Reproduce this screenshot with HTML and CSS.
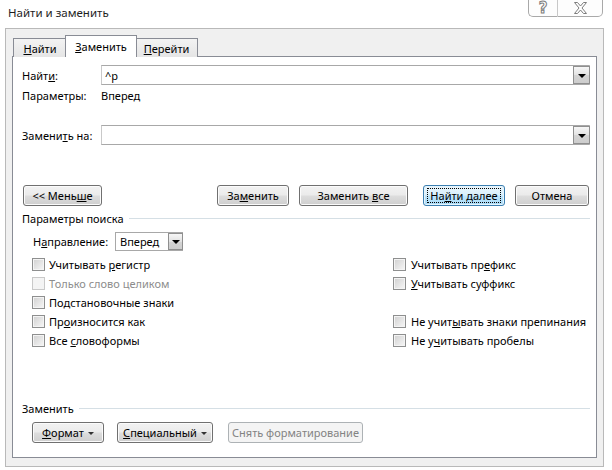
FILE: index.html
```html
<!DOCTYPE html>
<html lang="ru">
<head>
<meta charset="utf-8">
<title>Найти и заменить</title>
<link rel="stylesheet" href="styles.css">
</head>
<body>
<div class="window">
  <div class="titlebar">
    <span class="title">Найти и заменить</span>
    <div class="caption-btns">
      <div class="cap help"><span class="q">?</span></div>
      <div class="cap close">
        <svg width="15" height="12" viewBox="0 0 15 12"><polygon points="1.5,0.5 4.5,0.5 7.5,4 10.5,0.5 13.5,0.5 9,6 13.5,11.5 10.5,11.5 7.5,8 4.5,11.5 1.5,11.5 6,6" fill="#fff" stroke="#7d7d7d" stroke-width="1" stroke-linejoin="round"/></svg>
      </div>
    </div>
  </div>
  <div class="client">
    <div class="tabs">
      <div class="tab t-find"><span><u>Н</u>айти</span></div>
      <div class="tab t-replace active"><span><u>З</u>аменить</span></div>
      <div class="tab t-goto"><span><u>П</u>ерейти</span></div>
    </div>
    <div class="panel">
      <div class="field-row first">
        <span class="lbl">Найт<u>и</u>:</span>
        <div class="combo"><span class="val">^p</span><span class="dd"><i class="tri"></i></span></div>
      </div>
      <div class="field-row params">
        <span class="lbl">Параметры:</span>
        <span class="val">Вперед</span>
      </div>
      <div class="field-row replace">
        <span class="lbl">Замени<u>т</u>ь на:</span>
        <div class="combo"><span class="val"></span><span class="dd"><i class="tri"></i></span></div>
      </div>
      <div class="btn-row">
        <div class="btn b-less"><span>&lt;&lt; Мень<u>ш</u>е</span></div>
        <div class="btn b-repl"><span>За<u>м</u>енить</span></div>
        <div class="btn b-all"><span>Заменить <u>в</u>се</span></div>
        <div class="btn b-next default"><span class="focus"><span>На<u>й</u>ти далее</span></span></div>
        <div class="btn b-cancel"><span>Отмена</span></div>
      </div>
      <div class="group g-search"><span>Параметры поиска</span><i class="line"></i></div>
      <div class="dir-row">
        <span class="dir-lbl">Н<u>а</u>правление:</span>
        <div class="select"><span class="val">Вперед</span><span class="dd small"><i class="tri"></i></span></div>
      </div>
      <div class="checks">
        <div class="col">
          <div class="chk"><i class="box"></i><span>Учитывать <u>р</u>егистр</span></div>
          <div class="chk disabled"><i class="box"></i><span>Только слово целиком</span></div>
          <div class="chk"><i class="box"></i><span>По<u>д</u>становочные знаки</span></div>
          <div class="chk"><i class="box"></i><span>Пр<u>о</u>износится как</span></div>
          <div class="chk"><i class="box"></i><span>Все <u>с</u>ловоформы</span></div>
        </div>
        <div class="col right">
          <div class="chk"><i class="box"></i><span>Учитывать пр<u>е</u>фикс</span></div>
          <div class="chk"><i class="box"></i><span><u>У</u>читывать суффикс</span></div>
          <div class="chk empty"></div>
          <div class="chk"><i class="box"></i><span>Не учит<u>ы</u>вать знаки препинания</span></div>
          <div class="chk"><i class="box"></i><span>Не у<u>ч</u>итывать пробелы</span></div>
        </div>
      </div>
      <div class="group g-replace"><span>Заменить</span><i class="line"></i></div>
      <div class="btn-row bottom">
        <div class="btn b-fmt"><span><u>Ф</u>ормат</span><i class="mini"></i></div>
        <div class="btn b-spec"><span><u>С</u>пециальный</span><i class="mini"></i></div>
        <div class="btn b-clear disabled"><span>Снять форматирование</span></div>
      </div>
    </div>
  </div>
</div>
</body>
</html>
```

FILE: styles.css
```css
* { box-sizing: border-box; }
html, body { margin: 0; padding: 0; }
body {
  background: #ffffff;
  font-family: "Noto Sans", "Liberation Sans", sans-serif;
  font-size: 11px;
  color: #000;
  width: 612px;
  height: 470px;
  overflow: hidden;
}
u { text-decoration: underline; text-underline-offset: 1px; }

.window { width: 612px; height: 470px; }

.titlebar {
  height: 28px;
  display: flex;
  justify-content: space-between;
  align-items: flex-start;
}
.title {
  padding: 5px 0 0 8px;
  font-size: 11.5px;
  line-height: 16px;
  color: #1e1e1e;
}
.caption-btns {
  display: flex;
  margin-right: 9px;
  margin-top: -1px;
}
.cap {
  height: 18px;
  border: 1px solid #a9a9a9;
  background: #fdfdfd;
  display: flex;
  align-items: center;
  justify-content: center;
}
.help { width: 29px; border-radius: 0 0 0 5px; border-right: none; }
.close { width: 46px; border-radius: 0 0 5px 0; border-left: 1px solid #c8c8c8; }
.q {
  font-family: "DejaVu Sans", sans-serif;
  font-weight: bold;
  font-size: 15px;
  line-height: 15px;
  color: #fff;
  -webkit-text-stroke: 1px #7d7d7d;
}

.client {
  margin-left: 5px;
  width: 599px;
  height: 439px;
  background: #f0f0f0;
  border: 1px solid #b9b9b9;
  padding: 6px 6px 8px 6px;
  display: flex;
  flex-direction: column;
}

.tabs {
  display: flex;
  align-items: flex-end;
  height: 22px;
  padding-left: 1px;
  position: relative;
  z-index: 1;
  margin-bottom: -1px;
}
.tab {
  height: 19px;
  border: 1px solid #898c95;
  border-bottom: none;
  background: linear-gradient(#f3f3f3, #e5e5e5);
  display: flex;
  align-items: center;
  justify-content: center;
  padding-top: 1px;
}
.t-find { width: 54px; }
.t-goto { width: 63px; }
.tab.active {
  width: 72px;
  height: 22px;
  margin: 0 -2px;
  background: #ffffff;
  position: relative;
  z-index: 2;
  padding-top: 0;
  padding-bottom: 1px;
}

.panel {
  flex: 1;
  background: #ffffff;
  border: 1px solid #898c95;
  padding: 8px 6px 0 9px;
}

.field-row {
  display: grid;
  grid-template-columns: 79px 1fr;
  align-items: center;
  height: 20px;
}
.replace { margin-top: 20px; }

.combo {
  height: 20px;
  border: 1px solid #a8a8a8;
  border-left-color: #c9c9c9;
  border-right-color: #c9c9c9;
  display: flex;
  align-items: center;
  padding-left: 3px;
}
.combo .val { flex: 1; }
.dd {
  width: 17px;
  height: 18px;
  border: 1px solid #8f8f8f;
  background: linear-gradient(#f6f6f6, #e2e2e2 50%, #d4d4d4 51%, #cdcdcd);
  display: flex;
  align-items: center;
  justify-content: center;
  margin-right: -1px;
}
.tri {
  display: block;
  width: 0; height: 0;
  border-left: 4px solid transparent;
  border-right: 4px solid transparent;
  border-top: 4px solid #000;
  margin-top: 1px;
}

.btn-row {
  display: flex;
  margin-top: 40px;
  height: 21px;
}
.btn {
  height: 21px;
  border: 1px solid #707070;
  border-radius: 3px;
  background: linear-gradient(#f2f2f2 0%, #ebebeb 48%, #dddddd 52%, #cfcfcf 100%);
  box-shadow: inset 0 0 0 1px #fbfbfb;
  display: flex;
  align-items: center;
  justify-content: center;
  line-height: 14px;
  white-space: pre;
}
.b-less { width: 79px; margin-left: 1px; }
.b-repl { width: 72px; margin-left: 115px; }
.b-all { width: 109px; margin-left: 10px; }
.b-next { width: 82px; margin-left: 15px; }
.b-cancel { width: 74px; margin-left: 10px; }
.btn.default {
  border-color: #3c7fb1;
  background: linear-gradient(#eaf6fd 0%, #d9f0fc 48%, #bee6fd 52%, #a7d9f5 100%);
  box-shadow: inset 0 0 0 1px #e6f4fc;
  position: relative;
}
.focus {
  position: absolute;
  inset: 2px 3px;
  border: 1px dotted #000;
  display: flex;
  align-items: center;
  justify-content: center;
}

.group {
  display: flex;
  align-items: center;
  height: 16px;
  margin-top: 4px;
}
.group .line {
  flex: 1;
  border-top: 1px solid #d5dfe5;
  margin-left: 5px;
}
.g-replace { margin-top: 50px; }

.dir-row {
  display: flex;
  align-items: center;
  height: 19px;
  margin-top: 6px;
  padding-left: 11px;
}
.dir-lbl { width: 82px; }
.select {
  width: 68px;
  height: 19px;
  border: 1px solid #a8a8a8;
  display: flex;
  align-items: center;
  padding-left: 4px;
}
.select .val { flex: 1; }
.dd.small { width: 15px; height: 17px; }

.checks {
  display: grid;
  grid-template-columns: 361px 1fr;
  margin-top: 4px;
  padding-left: 10px;
}
.chk {
  height: 19px;
  display: flex;
  align-items: center;
  gap: 4px;
}
.box {
  display: block;
  width: 13px;
  height: 13px;
  border: 1px solid #8e8f8f;
  background: linear-gradient(135deg, #d0d0d0, #f7f7f7);
  box-shadow: inset 0 0 0 1px #f4f4f4;
}
.chk.disabled { color: #8d8d8d; }
.chk.disabled .box { border-color: #c9c9c9; background: #f4f4f4; box-shadow: none; }
.right .chk { gap: 5px; }

.btn-row.bottom { margin-top: 6px; }
.b-fmt { width: 72px; margin-left: 10px; }
.b-spec { width: 96px; margin-left: 13px; }
.b-clear { width: 135px; margin-left: 15px; }
.btn.disabled {
  border-color: #adb2b5;
  background: #f4f4f4;
  box-shadow: none;
  color: #838383;
}
.mini {
  display: block;
  width: 0; height: 0;
  border-left: 3px solid transparent;
  border-right: 3px solid transparent;
  border-top: 3px solid #333;
  margin-left: 4px;
  margin-top: 1px;
}
```
